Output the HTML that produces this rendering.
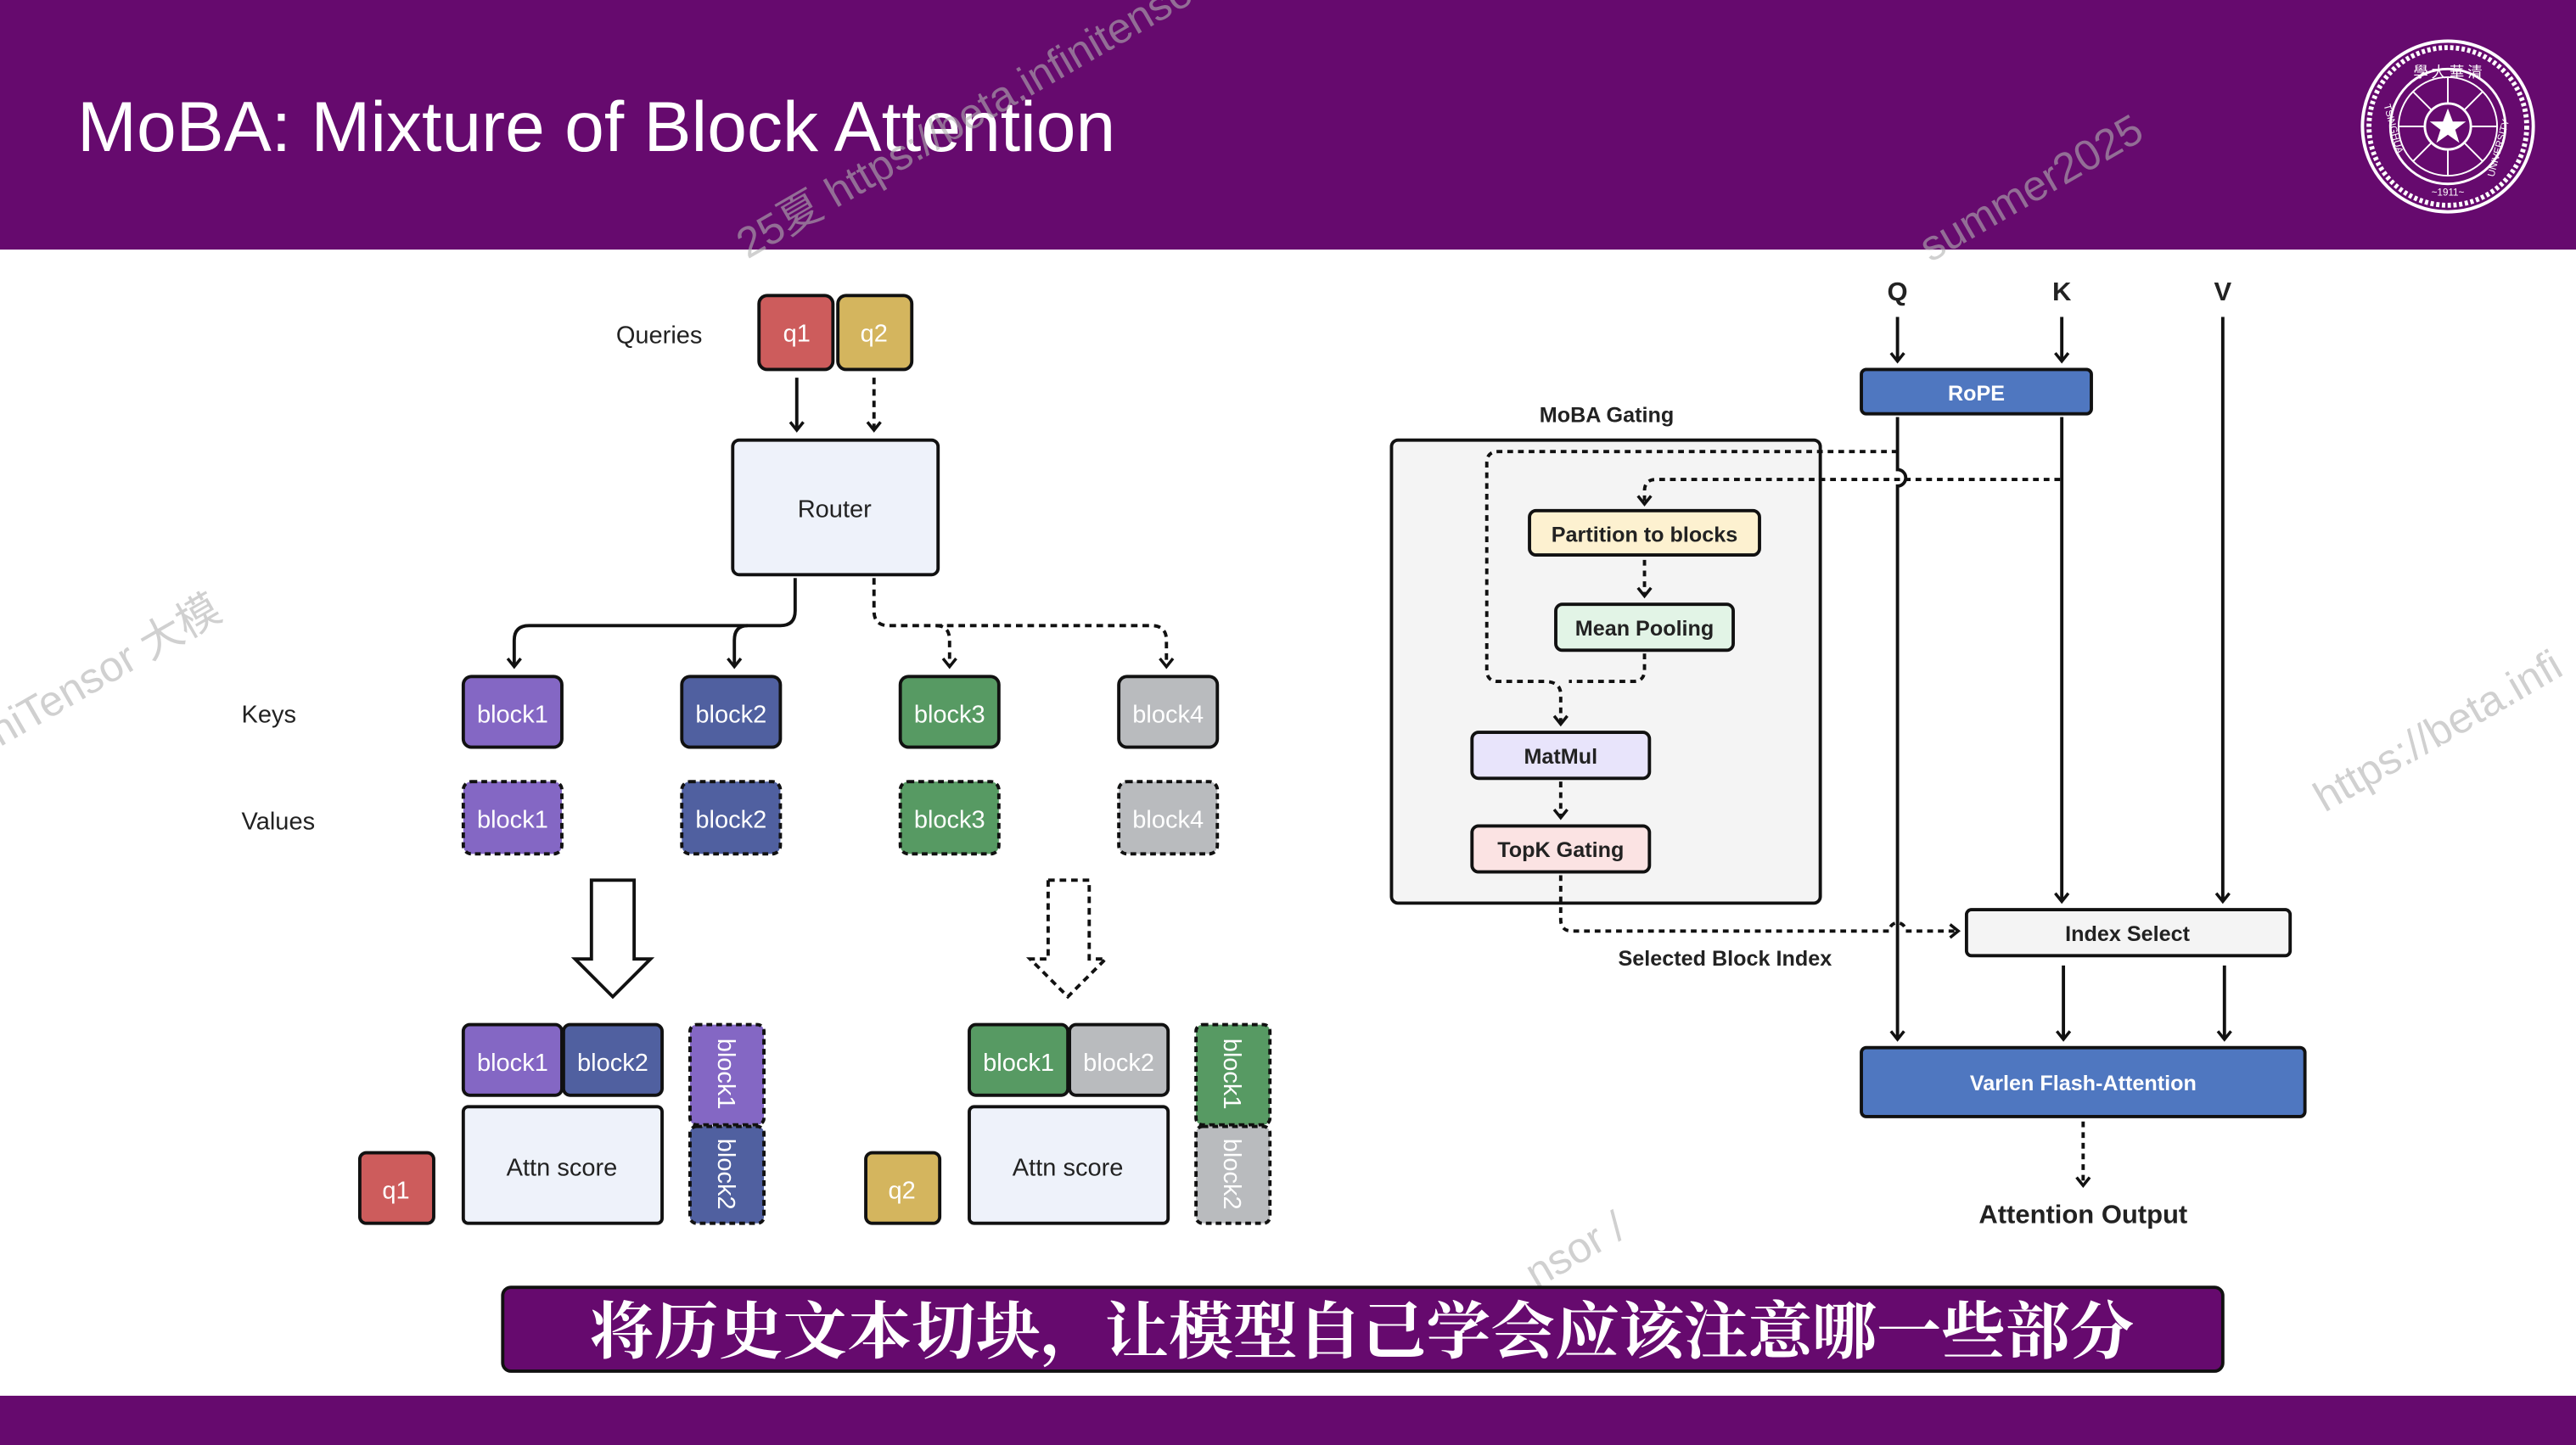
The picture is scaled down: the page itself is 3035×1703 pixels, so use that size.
<!DOCTYPE html>
<html><head><meta charset="utf-8"><style>
html,body{margin:0;padding:0;background:#fff;}
svg{display:block;}
.d{font-family:"Liberation Sans","Noto Sans CJK SC",sans-serif;}
</style></head><body>
<svg width="3035" height="1703" viewBox="0 0 1568 880" preserveAspectRatio="none" xmlns="http://www.w3.org/2000/svg" class="d">
<defs>
<marker id="ah" markerWidth="10" markerHeight="10" refX="8" refY="5" orient="auto" markerUnits="userSpaceOnUse" viewBox="0 0 10 10">
<path d="M3 1 L8 5 L3 9" fill="none" stroke="#111" stroke-width="1.8" stroke-dasharray="none"/></marker>
</defs>
<rect x="0" y="0" width="1568" height="152" fill="#660a6e"/>
<rect x="0" y="850" width="1568" height="30" fill="#660a6e"/>
<text x="47" y="92" fill="#fff" font-size="43" textLength="632" lengthAdjust="spacingAndGlyphs">MoBA: Mixture of Block Attention</text>
<!-- logo -->
<g fill="none" stroke="#fff">
<circle cx="1490" cy="77" r="52" stroke-width="2"/>
<circle cx="1490" cy="77" r="48" stroke-width="3" stroke-dasharray="2 1.5"/>
<circle cx="1490" cy="77" r="35" stroke-width="1.5"/>
<circle cx="1490" cy="77" r="30" stroke-width="1"/>
<circle cx="1490" cy="77" r="14" stroke-width="1.5"/>
<path d="M1490 47 V63 M1490 91 V107 M1460 77 H1476 M1504 77 H1520 M1469 56 L1480 67 M1511 56 L1500 67 M1469 98 L1480 87 M1511 98 L1500 87" stroke-width="1"/>
</g>
<path d="M1490 66 l3 8 h8 l-6.5 5 l2.5 8 l-7 -5 l-7 5 l2.5 -8 l-6.5 -5 h8z" fill="#fff"/>
<text x="1490" y="119" fill="#fff" font-size="6" text-anchor="middle">~1911~</text>
<text x="1490" y="47" fill="#fff" font-size="9" text-anchor="middle" font-family="Noto Sans CJK SC">學 大 華 清</text>
<text transform="translate(1451,64) rotate(75)" fill="#fff" font-size="6">TSINGHUA</text>
<text transform="translate(1518,108) rotate(-75)" fill="#fff" font-size="6">UNIVERSITY</text>
<!-- watermarks -->
<g fill="#b0b0b0" fill-opacity="0.6" font-size="26">
<text transform="translate(455,158) rotate(-30)">25夏 https://beta.infinitensor</text>
<text transform="translate(1175,160) rotate(-30)">summer2025</text>
<text transform="translate(0,455) rotate(-30)">niTensor 大模</text>
<text transform="translate(1415,495) rotate(-30)">https://beta.infi</text>
<text transform="translate(935,785) rotate(-30)">nsor /</text>
</g>
<!-- LEFT DIAGRAM -->
<g font-size="15" fill="#222">
<text x="375" y="209">Queries</text>
<text x="147" y="440">Keys</text>
<text x="147" y="505">Values</text>
</g>
<g stroke="#111" stroke-width="2">
<rect x="462" y="180" width="45" height="45" rx="5" fill="#cd5c5c"/>
<rect x="510" y="180" width="45" height="45" rx="5" fill="#d4b55e"/>
<rect x="446" y="268" width="125" height="82" rx="4" fill="#eef2fa"/>
</g>
<g fill="#fff" font-size="15" text-anchor="middle">
<text x="485" y="208">q1</text><text x="532" y="208">q2</text>
</g>
<text x="508" y="315" font-size="15" text-anchor="middle" fill="#222">Router</text>
<g fill="none" stroke="#111" stroke-width="2">
<path d="M485 230 V262" marker-end="url(#ah)"/>
<path d="M532 230 V262" stroke-dasharray="4 3" marker-end="url(#ah)"/>
<path d="M484 352 V372 q0 9 -9 9 H322 q-9 0 -9 9 V406" marker-end="url(#ah)"/>
<path d="M455 381 q-8 0 -8 9 V406" marker-end="url(#ah)"/>
<path d="M532 352 V372 q0 9 9 9 H701 q9 0 9 9 V406" stroke-dasharray="4 3" marker-end="url(#ah)"/>
<path d="M570 381 q8 0 8 9 V406" stroke-dasharray="4 3" marker-end="url(#ah)"/>
</g>
<g stroke="#111" stroke-width="2">
<rect x="282" y="412" width="60" height="43" rx="5" fill="#8467c4"/>
<rect x="415" y="412" width="60" height="43" rx="5" fill="#5060a0"/>
<rect x="548" y="412" width="60" height="43" rx="5" fill="#579a63"/>
<rect x="681" y="412" width="60" height="43" rx="5" fill="#b9bbbe"/>
<g stroke-dasharray="3.5 2.5">
<rect x="282" y="476" width="60" height="44" rx="5" fill="#8467c4"/>
<rect x="415" y="476" width="60" height="44" rx="5" fill="#5060a0"/>
<rect x="548" y="476" width="60" height="44" rx="5" fill="#579a63"/>
<rect x="681" y="476" width="60" height="44" rx="5" fill="#b9bbbe"/>
</g>
</g>
<g fill="#fff" font-size="15" text-anchor="middle">
<text x="312" y="440">block1</text><text x="445" y="440">block2</text><text x="578" y="440">block3</text><text x="711" y="440">block4</text>
<text x="312" y="504">block1</text><text x="445" y="504">block2</text><text x="578" y="504">block3</text><text x="711" y="504">block4</text>
</g>
<path d="M360 536 H386 V584 H396 L373 607 L350 584 H360Z" fill="#fff" stroke="#111" stroke-width="2"/>
<path d="M638 536 H663 V584 H673 L650 607 L627 584 H638Z" fill="#fff" stroke="#111" stroke-width="2" stroke-dasharray="4 3"/>
<!-- bottom groups -->
<g stroke="#111" stroke-width="2">
<rect x="282" y="624" width="60" height="43" rx="4" fill="#8467c4"/>
<rect x="343" y="624" width="60" height="43" rx="4" fill="#5060a0"/>
<rect x="282" y="674" width="121" height="71" rx="3" fill="#eef2fa"/>
<rect x="219" y="702" width="45" height="43" rx="4" fill="#cd5c5c"/>
<rect x="420" y="624" width="45" height="61" rx="4" fill="#8467c4" stroke-dasharray="3.5 2.5"/>
<rect x="420" y="686" width="45" height="59" rx="4" fill="#5060a0" stroke-dasharray="3.5 2.5"/>
<rect x="590" y="624" width="60" height="43" rx="4" fill="#579a63"/>
<rect x="651" y="624" width="60" height="43" rx="4" fill="#b9bbbe"/>
<rect x="590" y="674" width="121" height="71" rx="3" fill="#eef2fa"/>
<rect x="527" y="702" width="45" height="43" rx="4" fill="#d4b55e"/>
<rect x="728" y="624" width="45" height="61" rx="4" fill="#579a63" stroke-dasharray="3.5 2.5"/>
<rect x="728" y="686" width="45" height="59" rx="4" fill="#b9bbbe" stroke-dasharray="3.5 2.5"/>
</g>
<g fill="#fff" font-size="15" text-anchor="middle">
<text x="312" y="652">block1</text><text x="373" y="652">block2</text>
<text x="620" y="652">block1</text><text x="681" y="652">block2</text>
<text x="241" y="730">q1</text><text x="549" y="730">q2</text>
<text transform="translate(437,654) rotate(90)">block1</text>
<text transform="translate(437,715) rotate(90)">block2</text>
<text transform="translate(745,654) rotate(90)">block1</text>
<text transform="translate(745,715) rotate(90)">block2</text>
</g>
<g fill="#222" font-size="15" text-anchor="middle">
<text x="342" y="716">Attn score</text><text x="650" y="716">Attn score</text>
</g>
<!-- RIGHT DIAGRAM -->
<g font-weight="bold" font-size="16" fill="#222" text-anchor="middle">
<text x="1155" y="183">Q</text><text x="1255" y="183">K</text><text x="1353" y="183">V</text>
</g>
<text x="978" y="257" font-size="13" font-weight="bold" fill="#222" text-anchor="middle">MoBA Gating</text>
<rect x="847" y="268" width="261" height="282" rx="4" fill="#f4f4f4" stroke="#111" stroke-width="2"/>
<g fill="none" stroke="#111" stroke-width="2">
<path d="M1155 193 V220" marker-end="url(#ah)"/>
<path d="M1255 193 V220" marker-end="url(#ah)"/>
<path d="M1155 254 V286 a5 5 0 0 1 0 10 V633" marker-end="url(#ah)"/>
<path d="M1255 254 V549" marker-end="url(#ah)"/>
<path d="M1353 193 V549" marker-end="url(#ah)"/>
<path d="M1256 588 V633" marker-end="url(#ah)"/>
<path d="M1354 588 V633" marker-end="url(#ah)"/>
<g stroke-dasharray="3.5 3">
<path d="M1155 275 H912 q-7 0 -7 7 V408 q0 7 7 7 H940 q10 0 10 8 V441" marker-end="url(#ah)"/>
<path d="M1001 398 V408 q0 7 -7 7 H955"/>
<path d="M1254 292 H1008 q-7 0 -7 7 V307" marker-end="url(#ah)"/>
<path d="M1001 341 V363" marker-end="url(#ah)"/>
<path d="M950 476 V498" marker-end="url(#ah)"/>
<path d="M950 533 V560 q0 7 7 7 H1150 a5 5 0 0 1 10 0 H1192" marker-end="url(#ah)"/>
<path d="M1268 683 V722" marker-end="url(#ah)"/>
</g>
</g>
<g stroke="#111" stroke-width="2">
<rect x="1133" y="225" width="140" height="27" rx="3" fill="#4f77c0"/>
<rect x="931" y="311" width="140" height="27" rx="4" fill="#fdf1d0"/>
<rect x="947" y="368" width="108" height="28" rx="4" fill="#e2f4e6"/>
<rect x="896" y="446" width="108" height="28" rx="4" fill="#e8e4fb"/>
<rect x="896" y="503" width="108" height="28" rx="4" fill="#fbe3e3"/>
<rect x="1197" y="554" width="197" height="28" rx="3" fill="#f4f4f4"/>
<rect x="1133" y="638" width="270" height="42" rx="3" fill="#4f77c0"/>
</g>
<g font-size="13" font-weight="bold" text-anchor="middle" fill="#222">
<text x="1203" y="244" fill="#fff">RoPE</text>
<text x="1001" y="330">Partition to blocks</text>
<text x="1001" y="387">Mean Pooling</text>
<text x="950" y="465">MatMul</text>
<text x="950" y="522">TopK Gating</text>
<text x="1295" y="573">Index Select</text>
<text x="1050" y="588">Selected Block Index</text>
<text x="1268" y="664" fill="#fff">Varlen Flash-Attention</text>
<text x="1268" y="745" font-size="16">Attention Output</text>
</g>
<!-- banner -->
<rect x="306" y="784" width="1047" height="51" rx="5" fill="#660a6e" stroke="#111" stroke-width="2"/>
<text x="829" y="824" fill="#fff" font-size="38" font-weight="bold" text-anchor="middle" font-family="'Noto Serif CJK SC','Noto Sans CJK SC',serif" textLength="940" lengthAdjust="spacingAndGlyphs">将历史文本切块，让模型自己学会应该注意哪一些部分</text>
</svg>
</body></html>
